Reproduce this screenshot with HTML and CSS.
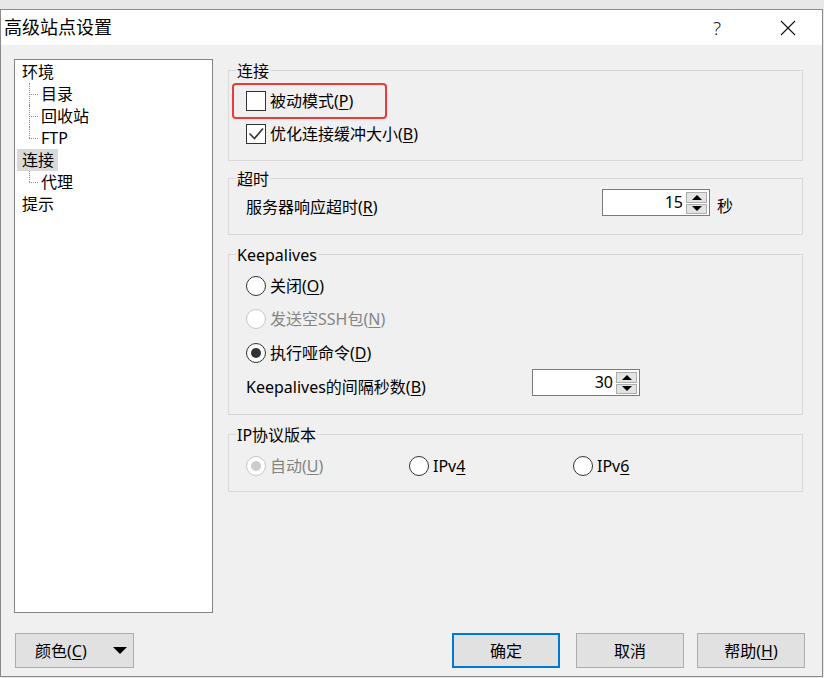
FILE: index.html
```html
<!DOCTYPE html>
<html lang="zh-CN">
<head>
<meta charset="utf-8">
<title>高级站点设置</title>
<link rel="stylesheet" href="styles.css">
</head>
<body>
<div class="dialog">
  <div class="titlebar">
    <span class="title">高级站点设置</span>
    <span class="tb-btn tb-help">?</span>
    <span class="tb-btn tb-close"><svg width="16" height="16" viewBox="0 0 16 16"><path d="M1 1L15 15M15 1L1 15" stroke="#111" stroke-width="1.1" fill="none"/></svg></span>
  </div>
  <div class="body">
    <div class="main">
      <div class="tree">
        <div class="node"><span class="label">环境</span></div>
        <div class="children">
          <div class="node child"><span class="label">目录</span></div>
          <div class="node child"><span class="label">回收站</span></div>
          <div class="node child"><span class="label">FTP</span></div>
        </div>
        <div class="node"><span class="label selected">连接</span></div>
        <div class="children">
          <div class="node child"><span class="label">代理</span></div>
        </div>
        <div class="node"><span class="label">提示</span></div>
      </div>

      <div class="panel">
        <div class="group g-conn">
          <div class="group-title">连接</div>
          <div class="group-content conn-content">
            <div class="opt highlight"><span class="box"></span><span>被动模式(<u>P</u>)</span></div>
            <div class="opt"><span class="box"><svg width="18" height="18" viewBox="0 0 18 18"><path d="M2.5 8.5L7.5 13.5L16 3.5" stroke="#333" stroke-width="1.6" fill="none"/></svg></span><span>优化连接缓冲大小(<u>B</u>)</span></div>
          </div>
        </div>

        <div class="group g-timeout">
          <div class="group-title">超时</div>
          <div class="group-content timeout-content">
            <div class="field-row">
              <span class="field-label w-timeout">服务器响应超时(<u>R</u>)</span>
              <div class="spin">
                <span class="spin-val">15</span>
                <div class="spin-btns">
                  <span class="spin-btn"><span class="arrow-up"></span></span>
                  <span class="spin-btn"><span class="arrow-down"></span></span>
                </div>
              </div>
              <span class="unit">秒</span>
            </div>
          </div>
        </div>

        <div class="group g-keep">
          <div class="group-title">Keepalives</div>
          <div class="group-content keep-content">
            <div class="opt"><span class="radio"></span><span>关闭(<u>O</u>)</span></div>
            <div class="opt disabled r2"><span class="radio dis"></span><span>发送空SSH包(<u>N</u>)</span></div>
            <div class="opt r3"><span class="radio on"></span><span>执行哑命令(<u>D</u>)</span></div>
            <div class="field-row r4">
              <span class="field-label w-keep">Keepalives的间隔秒数(<u>B</u>)</span>
              <div class="spin">
                <span class="spin-val">30</span>
                <div class="spin-btns">
                  <span class="spin-btn"><span class="arrow-up"></span></span>
                  <span class="spin-btn"><span class="arrow-down"></span></span>
                </div>
              </div>
            </div>
          </div>
        </div>

        <div class="group g-ip">
          <div class="group-title">IP协议版本</div>
          <div class="group-content ip-content">
            <div class="opt disabled"><span class="radio dis on"></span><span>自动(<u>U</u>)</span></div>
            <div class="opt"><span class="radio"></span><span>IPv<u>4</u></span></div>
            <div class="opt"><span class="radio"></span><span>IPv<u>6</u></span></div>
          </div>
        </div>
      </div>
    </div>

    <div class="footer">
      <button class="btn btn-color"><span>颜色(<u>C</u>)</span><span class="drop-arrow"></span></button>
      <button class="btn btn-ok">确定</button>
      <button class="btn btn-cancel">取消</button>
      <button class="btn btn-help">帮助(<u>H</u>)</button>
    </div>
  </div>
</div>
</body>
</html>
```

FILE: styles.css
```css
html, body {
  margin: 0;
  padding: 0;
}

body {
  width: 824px;
  height: 678px;
  overflow: hidden;
  background: #e8e8e8;
  font-family: "Noto Sans", "Noto Sans CJK SC", sans-serif;
  font-size: 16px;
  color: #000;
}

.dialog {
  box-sizing: border-box;
  width: 823px;
  height: 668px;
  margin-top: 9px;
  border: 1px solid #8a8a8a;
  background: #f0f0f0;
  display: flex;
  flex-direction: column;
}

/* ---------- title bar ---------- */
.titlebar {
  height: 35px;
  flex: none;
  background: #fff;
  display: flex;
  align-items: center;
  padding: 0 11px 0 3px;
}

.title {
  flex: 1;
  font-size: 18px;
  line-height: 35px;
}

.tb-btn {
  width: 46px;
  height: 35px;
  display: flex;
  align-items: center;
  justify-content: center;
}

.tb-help {
  margin-right: 25px;
  font-size: 19px;
  font-weight: 300;
  color: #222;
}

/* ---------- body ---------- */
.body {
  flex: 1;
  padding: 14px 17px 0 13px;
  display: flex;
  flex-direction: column;
}

.main {
  display: flex;
  gap: 15px;
}

/* ---------- tree ---------- */
.tree {
  box-sizing: border-box;
  width: 199px;
  height: 554px;
  flex: none;
  border: 1px solid #848484;
  background: #fff;
  padding: 1px 0 0 2px;
}

.node {
  height: 22px;
  display: flex;
  align-items: center;
}

.label {
  height: 22px;
  line-height: 22px;
  padding: 0 4px 0 5px;
}

.label.selected {
  background: #d9d9d9;
}

.children {
  margin-left: 19px;
}

.child {
  position: relative;
}

.child::before {
  content: "";
  position: absolute;
  left: -7px;
  top: 11px;
  width: 9px;
  border-top: 1px dotted #8c8c8c;
}

.child::after {
  content: "";
  position: absolute;
  left: -7px;
  top: 0;
  height: 22px;
  border-left: 1px dotted #8c8c8c;
}

.child:last-child::after {
  height: 11px;
}

/* ---------- panel / groups ---------- */
.panel {
  width: 575px;
  display: flex;
  flex-direction: column;
}

.group {
  border: 1px solid #d9d9d9;
}

.g-conn { margin-top: 11px; }
.g-timeout { margin-top: 17px; }
.g-keep { margin-top: 19px; }
.g-ip { margin-top: 19px; }

.group-title {
  width: max-content;
  height: 18px;
  line-height: 18px;
  margin: -9px 0 0 7px;
  padding: 0 1px;
  background: #f0f0f0;
}

.group-content {
  padding-left: 17px;
}

.conn-content {
  padding-top: 11px;
  padding-bottom: 16px;
  display: flex;
  flex-direction: column;
  gap: 13px;
}

.timeout-content {
  padding-top: 1px;
  padding-bottom: 18px;
}

.keep-content {
  padding-top: 12px;
  padding-bottom: 18px;
}

.keep-content .r2 { margin-top: 13px; }
.keep-content .r3 { margin-top: 14px; }
.keep-content .r4 { margin-top: 6px; }

.ip-content {
  padding-top: 12px;
  padding-bottom: 15px;
  display: grid;
  grid-template-columns: 163px 164px 1fr;
}

/* ---------- options ---------- */
.opt {
  display: flex;
  align-items: center;
  gap: 4px;
  height: 20px;
  line-height: 20px;
  width: max-content;
}

.opt.disabled {
  color: #858585;
}

.opt.highlight {
  position: relative;
}

.opt.highlight::after {
  content: "";
  position: absolute;
  left: -14px;
  top: -8px;
  width: 155px;
  height: 36px;
  box-sizing: border-box;
  border: 2px solid #ec3a3a;
  border-radius: 4px;
}

.box {
  box-sizing: border-box;
  width: 20px;
  height: 20px;
  flex: none;
  border: 1px solid #333;
  background: #fff;
  display: flex;
  align-items: center;
  justify-content: center;
}

.radio {
  box-sizing: border-box;
  width: 20px;
  height: 20px;
  flex: none;
  border: 1px solid #333;
  border-radius: 50%;
  background: #fff;
  display: flex;
  align-items: center;
  justify-content: center;
}

.radio.on::after {
  content: "";
  width: 10px;
  height: 10px;
  border-radius: 50%;
  background: #333;
}

.radio.dis {
  border-color: #c6c6c6;
}

.radio.dis.on::after {
  background: #cbcbcb;
}

u {
  text-underline-offset: 2px;
}

/* ---------- spinner rows ---------- */
.field-row {
  display: flex;
  align-items: flex-start;
  height: 27px;
}

.field-label {
  flex: none;
  margin-top: 9px;
  height: 18px;
  line-height: 18px;
}

.w-timeout { width: 356px; }
.w-keep { width: 286px; }

.unit {
  margin: 8px 0 0 7px;
  height: 18px;
  line-height: 18px;
}

.spin {
  box-sizing: border-box;
  width: 108px;
  height: 27px;
  flex: none;
  border: 1px solid #7a7a7a;
  background: #fff;
  display: flex;
}

.spin-val {
  flex: 1;
  text-align: right;
  padding-right: 3px;
  line-height: 24px;
}

.spin-btns {
  width: 21px;
  margin: 2px 2px 1px 0;
  display: flex;
  flex-direction: column;
  gap: 1px;
}

.spin-btn {
  flex: 1;
  box-sizing: border-box;
  border: 1px solid #adadad;
  background: #e3e3e3;
  display: flex;
  align-items: center;
  justify-content: center;
}

.arrow-up {
  width: 0;
  height: 0;
  border-left: 5px solid transparent;
  border-right: 5px solid transparent;
  border-bottom: 5px solid #000;
}

.arrow-down {
  width: 0;
  height: 0;
  border-left: 5px solid transparent;
  border-right: 5px solid transparent;
  border-top: 5px solid #000;
}

/* ---------- footer ---------- */
.footer {
  margin-top: 20px;
  display: flex;
  align-items: center;
}

.btn {
  box-sizing: border-box;
  height: 35px;
  width: 108px;
  border: 1px solid #adadad;
  background: #e1e1e1;
  font-family: inherit;
  font-size: 16px;
  color: #000;
  padding: 0;
  line-height: 20px;
}

.btn-color {
  width: 119px;
  margin-left: 1px;
  display: flex;
  align-items: center;
  justify-content: space-between;
  padding: 0 6px 0 19px;
}

.drop-arrow {
  width: 0;
  height: 0;
  border-left: 7.5px solid transparent;
  border-right: 7.5px solid transparent;
  border-top: 7px solid #000;
}

.btn-ok {
  margin-left: auto;
  border: 2px solid #0078d7;
}

.btn-cancel {
  margin-left: 16px;
}

.btn-help {
  margin-left: 13px;
}
```
